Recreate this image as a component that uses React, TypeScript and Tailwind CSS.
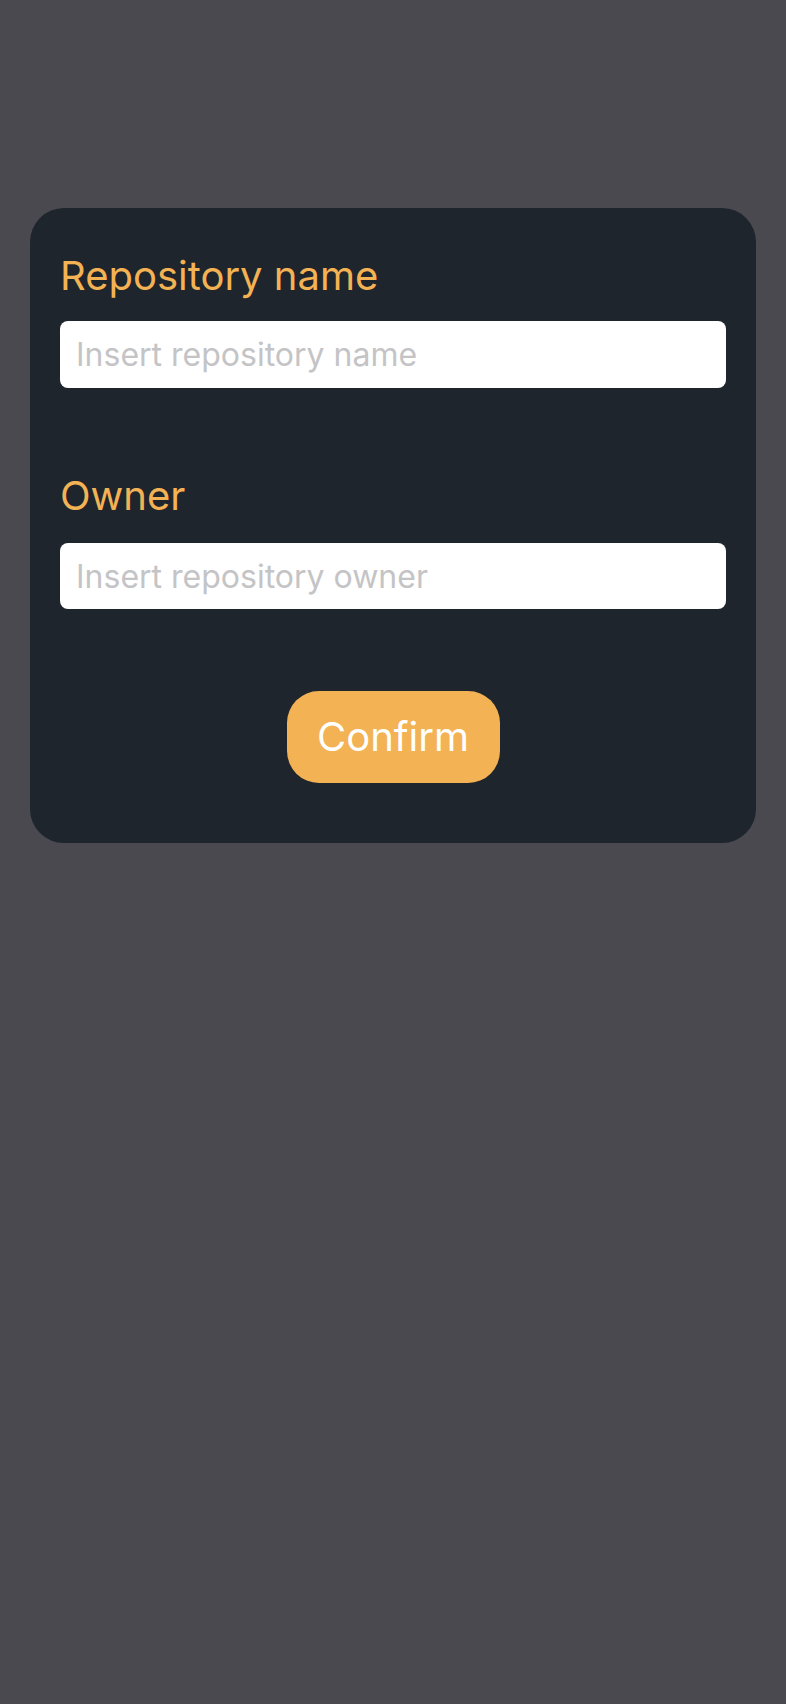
export default function App() {
  return (
    <div className="min-h-[1704px] bg-[#4a4950] px-[30px] pt-[208px] font-['Inter',sans-serif]">
      <div className="rounded-[34px] bg-[#1e252d] px-[30px] pt-[45px] pb-[60px]">
        <label className="block text-[40px] leading-[46px] text-[#f3b253]">Repository name</label>
        <input
          type="text"
          placeholder="Insert repository name"
          className="mt-[22px] block h-[67px] w-full rounded-[8px] bg-white px-[16px] text-[32px] text-gray-800 outline-none placeholder:text-[#c4c4c6]"
        />

        <label className="mt-[85px] block text-[40px] leading-[46px] text-[#f3b253]">Owner</label>
        <input
          type="text"
          placeholder="Insert repository owner"
          className="mt-[24px] block h-[66px] w-full rounded-[8px] bg-white px-[16px] text-[32px] text-gray-800 outline-none placeholder:text-[#c4c4c6]"
        />

        <div className="mt-[82px] flex justify-center">
          <button className="h-[92px] w-[213px] rounded-[32px] bg-[#f3b253] text-[40px] leading-none text-white">
            Confirm
          </button>
        </div>
      </div>
    </div>
  );
}
